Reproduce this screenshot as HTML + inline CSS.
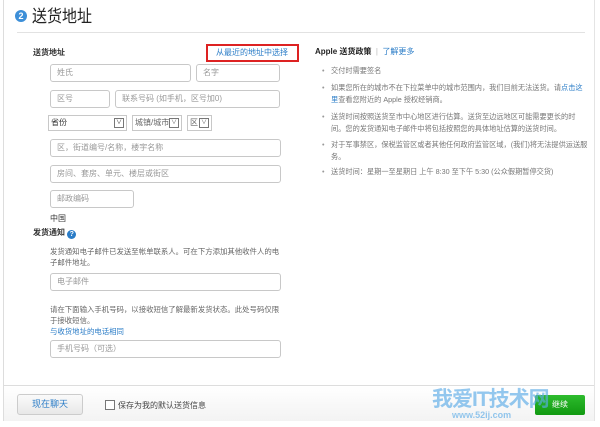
<!DOCTYPE html>
<html><head><meta charset="utf-8"><style>
*{margin:0;padding:0;box-sizing:border-box}
body{width:600px;height:427px;background:#fff;position:relative;overflow:hidden;font-family:"Liberation Sans","Noto Sans CJK SC",sans-serif;color:#333}
.a{position:absolute}
.in{position:absolute;border:1px solid #c8c8c8;border-radius:3px;background:#fff;font-size:8px;color:#999;padding-left:6px;line-height:16px}
.sel{position:absolute;border:1px solid #c8c8c8;background:#fff;font-size:8px;color:#333;padding-left:2px;line-height:14px}
.dd{position:absolute;right:2px;top:2px;width:10px;height:10px;border:1px solid #777;font-size:6px;line-height:8px;text-align:center}
.t{position:absolute;font-size:7.4px;color:#666;line-height:11px}
.b{position:absolute;font-size:7.2px;color:#777;line-height:12px;width:258px}
.b:before{content:"•";position:absolute;left:-9px;color:#999}
</style></head><body>
<div class="a" style="left:3px;top:0;width:1px;height:421px;background:#ddd"></div>
<div class="a" style="left:594px;top:0;width:1px;height:421px;background:#e4e4e4"></div>
<div class="a" style="left:15px;top:10px;width:12px;height:12px;border-radius:50%;background:#3d8fd8;color:#fff;font-size:9px;line-height:12px;text-align:center;font-weight:bold">2</div>
<div class="a" style="left:32px;top:6px;font-size:15px;line-height:20px;color:#222;transform:scaleY(1.15);transform-origin:top left">送货地址</div>
<div class="a" style="left:17px;top:32px;width:568px;height:1px;background:#e2e2e2"></div>
<div class="a" style="left:33px;top:47px;font-size:8px;font-weight:bold;color:#333">送货地址</div>
<div class="a" style="left:206px;top:44px;width:93px;height:18px;border:2px solid #d22;"></div>
<div class="a" style="left:216px;top:47px;font-size:8px;color:#2a7cc7">从最近的地址中选择</div>
<div class="in" style="left:50px;top:64px;width:141px;height:18px">姓氏</div>
<div class="in" style="left:196px;top:64px;width:84px;height:18px">名字</div>
<div class="in" style="left:50px;top:90px;width:60px;height:18px">区号</div>
<div class="in" style="left:115px;top:90px;width:165px;height:18px">联系号码 (如手机，区号加0)</div>
<div class="sel" style="left:48px;top:115px;width:79px;height:16px">省份<span class="dd">∨</span></div>
<div class="sel" style="left:132px;top:115px;width:50px;height:16px;color:#666">城镇/城市<span class="dd">∨</span></div>
<div class="sel" style="left:187px;top:115px;width:25px;height:16px;color:#666">区<span class="dd">∨</span></div>
<div class="in" style="left:50px;top:139px;width:231px;height:18px">区，街道编号/名称，楼宇名称</div>
<div class="in" style="left:50px;top:165px;width:231px;height:18px">房间、套房、单元、楼层或街区</div>
<div class="in" style="left:50px;top:190px;width:84px;height:18px">邮政编码</div>
<div class="a" style="left:50px;top:213px;font-size:8px;color:#333">中国</div>
<div class="a" style="left:33px;top:227px;font-size:8px;font-weight:bold;color:#333">发货通知 <span style="display:inline-block;width:9px;height:9px;border-radius:50%;background:#2a7cc7;color:#fff;font-size:7px;line-height:9px;text-align:center;vertical-align:-1px">?</span></div>
<div class="t" style="left:50px;top:246px;width:234px">发货通知电子邮件已发送至帐单联系人。可在下方添加其他收件人的电子邮件地址。</div>
<div class="in" style="left:50px;top:273px;width:231px;height:18px">电子邮件</div>
<div class="t" style="left:50px;top:304px;width:234px">请在下面输入手机号码，以接收短信了解最新发货状态。此处号码仅限于接收短信。</div>
<div class="a" style="left:50px;top:326px;font-size:7.4px;color:#2a7cc7">与收货地址的电话相同</div>
<div class="in" style="left:50px;top:340px;width:231px;height:18px">手机号码（可选）</div>
<div class="a" style="left:315px;top:46px;font-size:8px;color:#222;font-weight:bold">Apple 送货政策 <span style="color:#bbb;font-weight:normal">&nbsp;|&nbsp;</span> <span style="color:#2a7cc7;font-weight:normal">了解更多</span></div>
<div class="b" style="left:331px;top:65px">交付时需要签名</div>
<div class="b" style="left:331px;top:82px">如果您所在的城市不在下拉菜单中的城市范围内，我们目前无法送货。请<span style="color:#2a7cc7">点击这里</span>查看您附近的 Apple 授权经销商。</div>
<div class="b" style="left:331px;top:111px">送货时间按照送货至市中心地区进行估算。送货至边远地区可能需要更长的时间。您的发货通知电子邮件中将包括按照您的具体地址估算的送货时间。</div>
<div class="b" style="left:331px;top:139px">对于军事禁区，保税监管区或者其他任何政府监管区域，(我们)将无法提供运送服务。</div>
<div class="b" style="left:331px;top:166px">送货时间：星期一至星期日 上午 8:30 至下午 5:30 (公众假期暂停交货)</div>
<div class="a" style="left:4px;top:385px;width:590px;height:36px;background:linear-gradient(#fff,#f3f3f3);border-top:1px solid #ddd"></div>
<div class="a" style="left:17px;top:394px;width:66px;height:21px;border:1px solid #ccc;border-radius:3px;background:linear-gradient(#fafafa,#e8e8e8);font-size:9px;color:#2a7cc7;text-align:center;line-height:19px">现在聊天</div>
<div class="a" style="left:105px;top:400px;width:10px;height:10px;border:1px solid #777;background:#fff"></div>
<div class="a" style="left:118px;top:400px;font-size:8px;color:#444">保存为我的默认送货信息</div>
<div class="a" style="left:535px;top:395px;width:50px;height:20px;border-radius:2px;background:linear-gradient(#2dbb2d,#119911);color:#fff;font-size:8px;text-align:center;line-height:20px">继续</div>
<div class="a" style="left:432px;top:383px;font-size:21px;font-weight:bold;color:rgba(90,170,230,.65);letter-spacing:-1px">我爱IT技术网</div>
<div class="a" style="left:452px;top:410px;font-size:9px;font-weight:bold;color:rgba(90,170,230,.65)">www.52ij.com</div>
</body></html>
